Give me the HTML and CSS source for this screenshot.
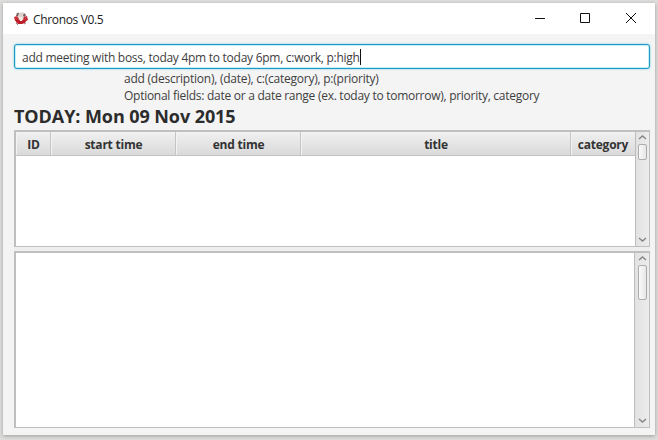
FILE: index.html
```html
<!DOCTYPE html>
<html lang="en">
<head>
<meta charset="utf-8">
<title>Chronos V0.5</title>
<link rel="stylesheet" href="styles.css">
</head>
<body>
<div class="window">
  <header class="titlebar">
    <svg class="logo" width="14" height="14" viewBox="0 0 14 14">
      <path d="M4 0L6 1L8 0L10 1L11 6L9 9L5 9L3 6Z" fill="#ddd3cd"/>
      <path d="M3 1L5 1L4 4L2 4ZM10 1L12 3L11 5L9 4Z" fill="#755c58"/>
      <path d="M0 5L3 4L5 7L4 10L1 9ZM10 5L13 4L14 8L11 10L9 7Z" fill="#c92f38"/>
      <path d="M2 8L7 8L12 8L11 11L8 12L4 12L2 10Z" fill="#bd202b"/>
      <path d="M5 5H9L8 9H6Z" fill="#f5e9e4"/>
      <path d="M2 11L4 13M10 12L12 11" stroke="#928783" fill="none"/>
    </svg>
    <span class="app-name">Chronos V0.5</span>
    <div class="controls">
      <svg width="12" height="12" viewBox="0 0 12 12"><path d="M1 5.5H11"/></svg>
      <svg width="12" height="12" viewBox="0 0 12 12"><path d="M1.5 .5H10.5V9.5H1.5Z"/></svg>
      <svg width="12" height="12" viewBox="0 0 12 12"><path d="M1 0L11 10M11 0L1 10"/></svg>
    </div>
  </header>
  <main class="content">
    <div class="command"><span class="command-text">add meeting with boss, today 4pm to today 6pm, c:work, p:high</span><span class="caret"></span></div>
    <div class="hints">
      <div class="hint-one">add (description), (date), c:(category), p:(priority)</div>
      <div class="hint-two">Optional fields: date or a date range (ex. today to tomorrow), priority, category</div>
    </div>
    <h1 class="today">TODAY: Mon 09 Nov 2015</h1>
    <section class="pane table-pane">
      <div class="table">
        <div class="columns">
          <span>ID</span><span>start time</span><span>end time</span><span>title</span><span>category</span>
        </div>
      </div>
      <div class="scrollbar">
        <svg width="9" height="5" viewBox="0 0 9 5"><path d="M1 4L4.5 1L8 4"/></svg>
        <i class="thumb"></i>
        <svg class="down" width="9" height="5" viewBox="0 0 9 5"><path d="M1 1L4.5 4L8 1"/></svg>
      </div>
    </section>
    <div class="divider"></div>
    <section class="pane list-pane">
      <div class="list"></div>
      <div class="scrollbar">
        <svg width="9" height="5" viewBox="0 0 9 5"><path d="M1 4L4.5 1L8 4"/></svg>
        <i class="thumb"></i>
        <svg class="down" width="9" height="5" viewBox="0 0 9 5"><path d="M1 1L4.5 4L8 1"/></svg>
      </div>
    </section>
  </main>
</div>
</body>
</html>
```
FILE: styles.css
```css
* { box-sizing: border-box; }
body {
  margin: 0;
  width: 658px;
  height: 440px;
  overflow: hidden;
  padding: 3px;
  background: #dededc;
  font: 12px/17px "Open Sans", "Noto Sans", sans-serif;
  color: #404040;
}
.window {
  width: 652px;
  height: 432px;
  background: #f4f4f4;
  box-shadow: 0 1px 4px rgba(0, 0, 0, .3);
}
.titlebar {
  height: 31px;
  padding: 0 18px 0 11px;
  display: flex;
  align-items: center;
  background: #fff;
}
.logo { margin-right: 5px; }
.app-name { padding-top: 1px; letter-spacing: -.35px; color: #222; }
.controls { margin-left: auto; display: flex; gap: 33px; }
.controls svg { fill: none; stroke: #111; stroke-width: 1; }
.controls svg:nth-child(-n+2) { margin-left: -1px; margin-right: 1px; }
.content { padding: 10px 5px 0 11px; }
.command {
  height: 25px;
  padding-left: 7px;
  display: flex;
  align-items: center;
  background: #fff;
  border: 1px solid #209bc5;
  border-radius: 3px;
  box-shadow: inset 0 0 0 1px #c4effa, 0 0 2px #61bfdc;
  white-space: nowrap;
}
.command-text { letter-spacing: -.27px; padding-top: 1px; }
.caret { width: 1px; height: 16px; background: #111; }
.hints { margin-left: 110px; padding-top: 1px; height: 34px; white-space: nowrap; }
.hint-one { letter-spacing: -.24px; }
.hint-two { letter-spacing: -.27px; }
.today {
  margin: 0;
  height: 27px;
  font-size: 18px;
  line-height: 27px;
  letter-spacing: -.08px;
  color: #2c2c2c;
  white-space: nowrap;
}
.pane { display: flex; background: #fff; border: 1px solid #bfbfbf; border-left-width: 2px; }
.table-pane { height: 117px; border-top-width: 2px; }
.table, .list { flex: 1; min-width: 0; }
.columns {
  height: 24px;
  display: grid;
  grid-template-columns: 35px 125px 125px 270px 1fr;
  background: linear-gradient(#f0f0f0, #dadada);
  border-bottom: 1px solid #c2c2c2;
  font-weight: 700;
  line-height: 26px;
  text-align: center;
  letter-spacing: -.22px;
  color: #333;
}
.columns span {
  height: 23px;
  padding-left: 1px;
  border-right: 1px solid #c4c4c4;
  box-shadow: inset 1px 1px #f3f3f3;
}
.columns span:last-child { padding-left: 0; border-right: 0; }
.scrollbar {
  width: 15px;
  padding: 3px 0 4px;
  display: flex;
  flex-direction: column;
  align-items: center;
  background: linear-gradient(90deg, #e2e2e2, #ececec);
  border-left: 1px solid #bdbdbd;
}
.table-pane .scrollbar { width: 14px; }
.scrollbar svg { fill: none; stroke: #858585; stroke-width: 1.4; }
.scrollbar .down { margin-top: auto; }
.thumb {
  width: 9px;
  height: 16px;
  margin-top: 4px;
  border: 1px solid #adadad;
  border-radius: 2px;
  background: linear-gradient(90deg, #fafafa, #e6e6e6);
}
.divider { height: 4px; background: #eee; }
.list-pane { height: 177px; border-top-width: 2px; }
.list-pane .thumb { height: 35px; }
```
